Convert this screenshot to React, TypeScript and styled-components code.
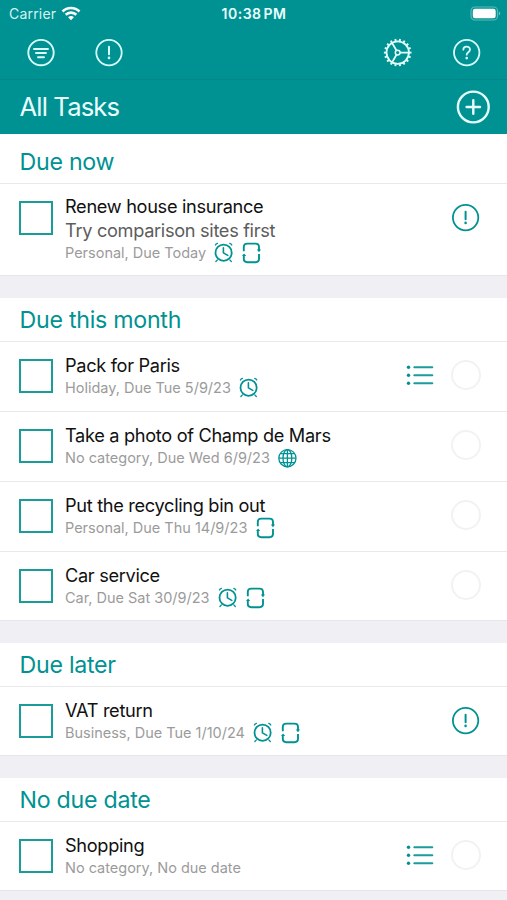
import React from "react";
import styled, { createGlobalStyle } from "styled-components";

const TEAL = "#009293";

const GlobalStyle = createGlobalStyle`
  * { box-sizing: border-box; }
  html, body { margin: 0; padding: 0; background: #efeff4; }
  body { font-family: Inter, "Liberation Sans", sans-serif; overflow: hidden; }
  svg { display: block; flex: none; }
`;

const Screen = styled.div`
  width: 507px;
  height: 900px;
  overflow: hidden;
  background: #efeff4;
`;

const Header = styled.header`
  height: 134px;
  background: ${TEAL};
  color: #eafffd;
`;

const StatusBar = styled.div`
  display: grid;
  grid-template-columns: 1fr auto 1fr;
  align-items: center;
  height: 27px;
  padding: 0 5px 0 9px;
`;

const Carrier = styled.div`
  display: flex;
  align-items: center;
  gap: 5px;
  font-size: 14px;
  line-height: 20px;
  letter-spacing: 0.2px;
  color: #d5f3f1;
`;

const Clock = styled.div`
  margin-right: 3px;
  font-size: 14px;
  font-weight: 600;
  line-height: 20px;
  letter-spacing: 0.5px;
  word-spacing: -2px;
  white-space: nowrap;
`;

const BatterySlot = styled.div`
  display: flex;
  justify-content: flex-end;
`;

const Toolbar = styled.nav`
  display: flex;
  align-items: center;
  justify-content: space-between;
  height: 53px;
  padding: 0 25px 1px 26px;
  border-bottom: 1px solid #068787;
`;

const ToolGroup = styled.div<{ $gap: number }>`
  display: flex;
  gap: ${(p) => p.$gap}px;
`;

const TitleBar = styled.div`
  display: flex;
  align-items: center;
  justify-content: space-between;
  height: 54px;
  padding: 0 16px 0 19.5px;
`;

const PageTitle = styled.h1`
  margin: 0;
  font-size: 25.6px;
  font-weight: 400;
  line-height: 32px;
  letter-spacing: -0.85px;
`;

const Section = styled.section`
  margin-bottom: 22px;
  background: #fff;
  border-bottom: 1px solid #e6e6ea;
`;

const SectionTitle = styled.h2<{ $first?: boolean }>`
  margin: 0;
  height: ${(p) => (p.$first ? 49 : 43)}px;
  padding: ${(p) => (p.$first ? 13 : 7)}px 19.5px 0;
  font-size: 23.2px;
  font-weight: 400;
  line-height: 30px;
  letter-spacing: -0.27px;
  color: ${TEAL};
`;

const Row = styled.div<{ $tall?: boolean }>`
  display: flex;
  height: ${(p) => (p.$tall ? 92 : 70)}px;
  padding: 0 26px 0 19px;
  border-top: 1px solid #e9e9ec;

  &:last-child {
    height: ${(p) => (p.$tall ? 92 : 69)}px;
  }
`;

const CheckBox = styled.div`
  flex: none;
  width: 34px;
  height: 34px;
  margin: 17px 12px 0 0;
  border: 2px solid #1a9c9b;
`;

const Details = styled.div`
  flex: 1;
  padding-top: 11px;
  white-space: nowrap;
`;

const TaskTitle = styled.div<{ $tight?: boolean }>`
  font-size: 18.2px;
  line-height: ${(p) => (p.$tight ? 23.5 : 24)}px;
  letter-spacing: -0.32px;
  color: #111;
`;

const Note = styled(TaskTitle)`
  color: #5d5d5d;
`;

const Meta = styled.div`
  display: flex;
  align-items: center;
  height: 22px;
  font-size: 14.5px;
  line-height: 22px;
  letter-spacing: -0.01px;
  color: #9b9b9b;
`;

const MetaIcons = styled.div`
  display: flex;
  gap: 8px;
  margin-left: 8.3px;
`;

const Actions = styled.div`
  display: flex;
  align-items: center;
  gap: 17px;
  height: 32px;
  margin-top: 17px;
`;

const EmptyRing = styled.div`
  width: 30px;
  height: 30px;
  border: 2px solid #f2f2f4;
  border-radius: 50%;
`;

const RingSlot = styled.div`
  display: flex;
  justify-content: center;
  width: 30px;
`;

const Wifi = () => (
  <svg width="20" height="15" viewBox="0 0 20 15" fill="none" stroke="#fff" strokeWidth="2.6">
    <path d="M1.5 5.5C6.2.8 13.8.8 18.5 5.5" />
    <path d="M4.7 8.8c3-2.9 7.6-2.9 10.6 0" />
    <path d="M7.1 11.2c1.6-1.5 4.2-1.5 5.8 0L10 14.2z" fill="#fff" stroke="none" />
  </svg>
);

const Battery = () => (
  <svg width="32" height="16" viewBox="0 0 32 16">
    <rect x="1" y="1" width="26.5" height="13" rx="3.8" fill="none" stroke="#5ab9b6" strokeWidth="1.2" />
    <rect x="2.8" y="2.8" width="22.9" height="9.4" rx="2.2" fill="#fff" />
    <path d="M28.9 5.5v4c1.6-.7 1.6-3.3 0-4z" fill="#75c6c3" />
  </svg>
);

const Filter = () => (
  <svg width="30" height="30" viewBox="0 0 30 30" fill="none" stroke="#d9fffd" strokeWidth="1.9" strokeLinecap="round">
    <circle cx="15" cy="14.6" r="12.7" />
    <path d="M8 11h14M10 15h10M12 19.2h6" />
  </svg>
);

const Alert = ({ color, cx = 15, cy = 14.6 }: { color: string; cx?: number; cy?: number }) => (
  <svg width="30" height="30" viewBox="0 0 30 30" fill="none" stroke={color} strokeWidth="1.8" strokeLinecap="round">
    <circle cx={cx} cy={cy} r="12.7" />
    <path d={`M${cx} ${cy - 5.8}v7.5`} strokeWidth="2" />
    <circle cx={cx} cy={cy + 5.3} r="1.3" fill={color} stroke="none" />
  </svg>
);

const teeth = Array.from({ length: 18 }, (_, i) => i * 20 + 10);

const Gear = () => (
  <svg width="30" height="30" viewBox="0 0 30 30" fill="none" stroke="#e3fffd" strokeWidth="1.8">
    <g transform="translate(-.3 -.4)">
      <circle cx="15" cy="15" r="11.2" />
      <circle cx="15" cy="15" r="2.4" strokeWidth="1.5" />
      <path d="M17.4 15h8.6M13.8 12.9 9.5 5.5M13.8 17.1 9.5 24.5" />
      {teeth.map((a) => (
        <path key={a} d="M15 3.8V1.2" strokeWidth="1.9" transform={`rotate(${a} 15 15)`} />
      ))}
    </g>
  </svg>
);

const Help = () => (
  <svg width="30" height="30" viewBox="0 0 30 30" fill="none" stroke="#d9fffd" strokeWidth="1.8" strokeLinecap="round">
    <g transform="translate(-.3 -.4)">
      <circle cx="15" cy="15" r="12.7" />
      <path d="M11.6 12.1c.1-4.2 6.8-4 6.7-.1 0 2.6-3.3 2.6-3.3 5.1" />
      <circle cx="15" cy="20.5" r="1.3" fill="#d9fffd" stroke="none" />
    </g>
  </svg>
);

const Plus = () => (
  <svg width="36" height="36" viewBox="0 0 36 36" fill="none" stroke="#e6fffd" strokeWidth="2.4" strokeLinecap="round">
    <circle cx="18.3" cy="18" r="15.4" />
    <path d="M11.6 18H25M18.3 11.3v13.4" />
  </svg>
);

const Alarm = () => (
  <svg width="20" height="22" viewBox="0 0 20 22" fill="none" stroke={TEAL} strokeWidth="1.8" strokeLinecap="round">
    <g transform="translate(-.4 -.3)">
      <circle cx="10" cy="11" r="8.1" />
      <path d="M9.8 6.2v5l4.4 2.5" strokeWidth="1.6" />
      <path d="M1.8 3.3c.4-.9 1-1.4 2-1.7M16.2 1.6c1 .3 1.6.8 2 1.7M3.8 18.2l-1.5 1.6M16.2 18.2l1.5 1.6" strokeWidth="1.3" />
    </g>
  </svg>
);

const Repeat = () => (
  <svg width="20" height="22" viewBox="0 0 20 22" fill="none" stroke={TEAL} strokeWidth="1.9">
    <path d="M1.8 9.2V5c0-2.1 1.3-3.4 3.5-3.4h8.2c2.2 0 3.5 1.3 3.5 3.4v3.2" />
    <path d="M17 12v4.8c0 2.1-1.3 3.4-3.5 3.4H5.3c-2.2 0-3.5-1.3-3.5-3.4v-3" />
    <path d="M14.8 7.6h4.2L17 10.2zM0 14h4.2l-2.1-2.6z" fill={TEAL} stroke="none" />
  </svg>
);

const Globe = () => (
  <svg width="20" height="22" viewBox="0 0 20 22" fill="none" stroke={TEAL} strokeWidth="1.3">
    <g transform="translate(-.6 0)">
      <circle cx="10" cy="11.2" r="8.6" />
      <ellipse cx="10" cy="11.2" rx="4.4" ry="8.6" />
      <path d="M10 2.6v17.2M1.4 11.2h17.2M2.8 6.7h14.4M2.8 15.7h14.4" />
    </g>
  </svg>
);

const List = () => (
  <svg width="28" height="22" viewBox="0 0 28 22" stroke="#1a9c9b" strokeWidth="2" strokeLinecap="round">
    {[3.3, 11.3, 19.3].map((y) => (
      <g key={y}>
        <circle cx="2.5" cy={y} r="1.7" fill={TEAL} stroke="none" />
        <path d={`M8.3 ${y}h18`} />
      </g>
    ))}
  </svg>
);

const metaIcons = { alarm: Alarm, repeat: Repeat, globe: Globe };

interface Task {
  title: string;
  note?: string;
  meta: string;
  icons?: (keyof typeof metaIcons)[];
  urgent?: boolean;
  list?: boolean;
}

const sections: { title: string; tasks: Task[] }[] = [
  {
    title: "Due now",
    tasks: [
      {
        title: "Renew house insurance",
        note: "Try comparison sites first",
        meta: "Personal, Due Today",
        icons: ["alarm", "repeat"],
        urgent: true,
      },
    ],
  },
  {
    title: "Due this month",
    tasks: [
      { title: "Pack for Paris", meta: "Holiday, Due Tue 5/9/23", icons: ["alarm"], list: true },
      { title: "Take a photo of Champ de Mars", meta: "No category, Due Wed 6/9/23", icons: ["globe"] },
      { title: "Put the recycling bin out", meta: "Personal, Due Thu 14/9/23", icons: ["repeat"] },
      { title: "Car service", meta: "Car, Due Sat 30/9/23", icons: ["alarm", "repeat"] },
    ],
  },
  {
    title: "Due later",
    tasks: [{ title: "VAT return", meta: "Business, Due Tue 1/10/24", icons: ["alarm", "repeat"], urgent: true }],
  },
  {
    title: "No due date",
    tasks: [{ title: "Shopping", meta: "No category, No due date", list: true }],
  },
];

const TaskRow = ({ task }: { task: Task }) => (
  <Row $tall={!!task.note}>
    <CheckBox />
    <Details>
      <TaskTitle $tight={!!task.note}>{task.title}</TaskTitle>
      {task.note && <Note $tight>{task.note}</Note>}
      <Meta>
        <span>{task.meta}</span>
        <MetaIcons>
          {task.icons?.map((name) => {
            const Icon = metaIcons[name];
            return <Icon key={name} />;
          })}
        </MetaIcons>
      </Meta>
    </Details>
    <Actions>
      {task.list && <List />}
      <RingSlot>{task.urgent ? <Alert color={TEAL} cx={14.6} cy={15.6} /> : <EmptyRing />}</RingSlot>
    </Actions>
  </Row>
);

export default function App() {
  return (
    <Screen>
      <GlobalStyle />
      <Header>
        <StatusBar>
          <Carrier>
            Carrier <Wifi />
          </Carrier>
          <Clock>10:38 PM</Clock>
          <BatterySlot>
            <Battery />
          </BatterySlot>
        </StatusBar>
        <Toolbar>
          <ToolGroup $gap={38}>
            <Filter />
            <Alert color="#d9fffd" />
          </ToolGroup>
          <ToolGroup $gap={39}>
            <Gear />
            <Help />
          </ToolGroup>
        </Toolbar>
        <TitleBar>
          <PageTitle>All Tasks</PageTitle>
          <Plus />
        </TitleBar>
      </Header>
      {sections.map((section, i) => (
        <Section key={section.title}>
          <SectionTitle $first={i === 0}>{section.title}</SectionTitle>
          {section.tasks.map((task) => (
            <TaskRow key={task.title} task={task} />
          ))}
        </Section>
      ))}
    </Screen>
  );
}
